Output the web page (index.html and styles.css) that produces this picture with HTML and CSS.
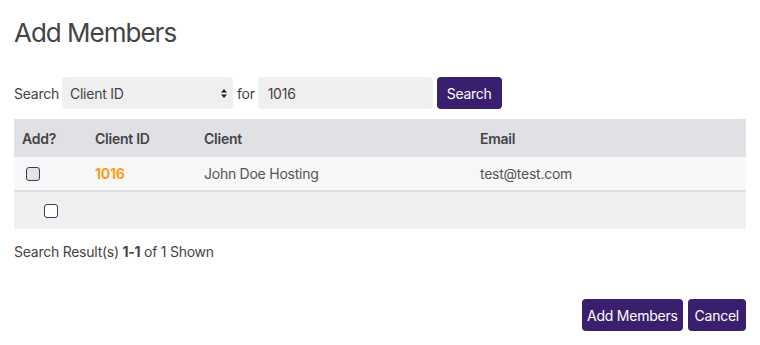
FILE: index.html
```html
<!DOCTYPE html>
<html lang="en">
<head>
  <meta charset="UTF-8">
  <meta name="viewport" content="width=device-width, initial-scale=1.0">
  <title>Add Members</title>
  <link rel="stylesheet" href="styles.css">
</head>
<body>
  <div class="container">
    <h2>Add Members</h2>
    <form class="search-form">
      <label for="field">Search</label>
      <select id="field" class="field">
        <option>Client ID</option>
      </select>
      <label for="query">for</label>
      <input type="text" id="query" class="field" value="1016">
      <button type="button" class="btn btn-search">Search</button>
    </form>
    <table class="results">
      <thead>
        <tr>
          <th class="col-add">Add?</th>
          <th class="col-id">Client ID</th>
          <th class="col-client">Client</th>
          <th>Email</th>
        </tr>
      </thead>
      <tbody>
        <tr class="row">
          <td><input type="checkbox" class="check"></td>
          <td><a href="#" class="client-id">1016</a></td>
          <td>John Doe Hosting</td>
          <td>test@test.com</td>
        </tr>
        <tr class="row-all">
          <td colspan="4"><input type="checkbox" class="check check-all"></td>
        </tr>
      </tbody>
    </table>
    <p class="summary">Search Result(s) <strong>1-1</strong> of 1 Shown</p>
    <div class="actions">
      <button type="button" class="btn btn-add">Add Members</button>
      <button type="button" class="btn btn-cancel">Cancel</button>
    </div>
  </div>
</body>
</html>
```

FILE: styles.css
```css
body {
  font-family: 'Inter', 'Open Sans', sans-serif;
  margin: 0;
  padding: 0;
  background: white;
  color: #444;
  font-size: 14px;
  letter-spacing: -0.25px;
}
.container {
  padding: 17px 14px 0;
}
h2 {
  margin: 0 0 28px;
  font-size: 26px;
  font-weight: 400;
  line-height: 32px;
  color: #444;
  letter-spacing: -1px;
}
.search-form {
  display: flex;
  align-items: center;
  height: 32px;
}
.search-form label {
  color: #444;
  margin-right: 3px;
}
.search-form label[for="query"] {
  margin-left: 4px;
}
.field {
  height: 32px;
  box-sizing: border-box;
  border: none;
  border-radius: 4px;
  background-color: #efefef;
  font-family: inherit;
  font-size: 14px;
  letter-spacing: -0.25px;
  color: #444;
  padding: 0 8px;
  outline: none;
}
select.field {
  width: 171px;
  appearance: none;
  background-image: url("data:image/svg+xml,%3Csvg xmlns='http://www.w3.org/2000/svg' width='6' height='9'%3E%3Cpath d='M0 3.5L3 0L6 3.5ZM0 5.5L3 9L6 5.5Z' fill='%23222'/%3E%3C/svg%3E");
  background-repeat: no-repeat;
  background-position: 159px 12px;
}
input.field {
  width: 175px;
  padding: 0 10px;
}
.btn {
  height: 32px;
  padding: 0 6px;
  background: #3b1f6f;
  color: white;
  border: none;
  border-radius: 4px;
  font-family: inherit;
  font-size: 14px;
  letter-spacing: -0.25px;
  cursor: pointer;
}
.btn-search {
  margin-left: 4px;
  padding: 0 10px;
}
.results {
  width: 100%;
  margin-top: 10px;
  border-collapse: collapse;
}
.results th {
  background: #e1e1e5;
  height: 38px;
  padding: 0 8px;
  text-align: left;
  font-weight: 600;
  color: #444;
}
.results td {
  padding: 0 8px;
  color: #555;
}
.col-add { width: 57px; }
.col-id { width: 93px; }
.col-client { width: 260px; }
.row td {
  height: 33px;
  background: #f7f7f7;
  border-bottom: 2px solid #dedee3;
}
.row-all td {
  height: 37px;
  background: #f0f0f0;
}
.check {
  appearance: none;
  width: 14px;
  height: 14px;
  margin: 0 0 0 4px;
  display: block;
  border: 1.5px solid #3d3a5c;
  border-radius: 3px;
  background: #e4e4e8;
  box-sizing: border-box;
}
.check-all {
  margin-left: 22px;
  background: white;
}
.client-id {
  color: #f7a11a;
  font-weight: 700;
  text-decoration: none;
}
.summary {
  margin: 14px 0 0;
  line-height: 17px;
  color: #444;
}
.summary strong {
  font-weight: 700;
}
.actions {
  display: flex;
  justify-content: flex-end;
  gap: 5px;
  margin-top: 39px;
}
.btn-add {
  padding: 0 5px;
}
.btn-cancel {
  padding: 0 7px;
}
```
